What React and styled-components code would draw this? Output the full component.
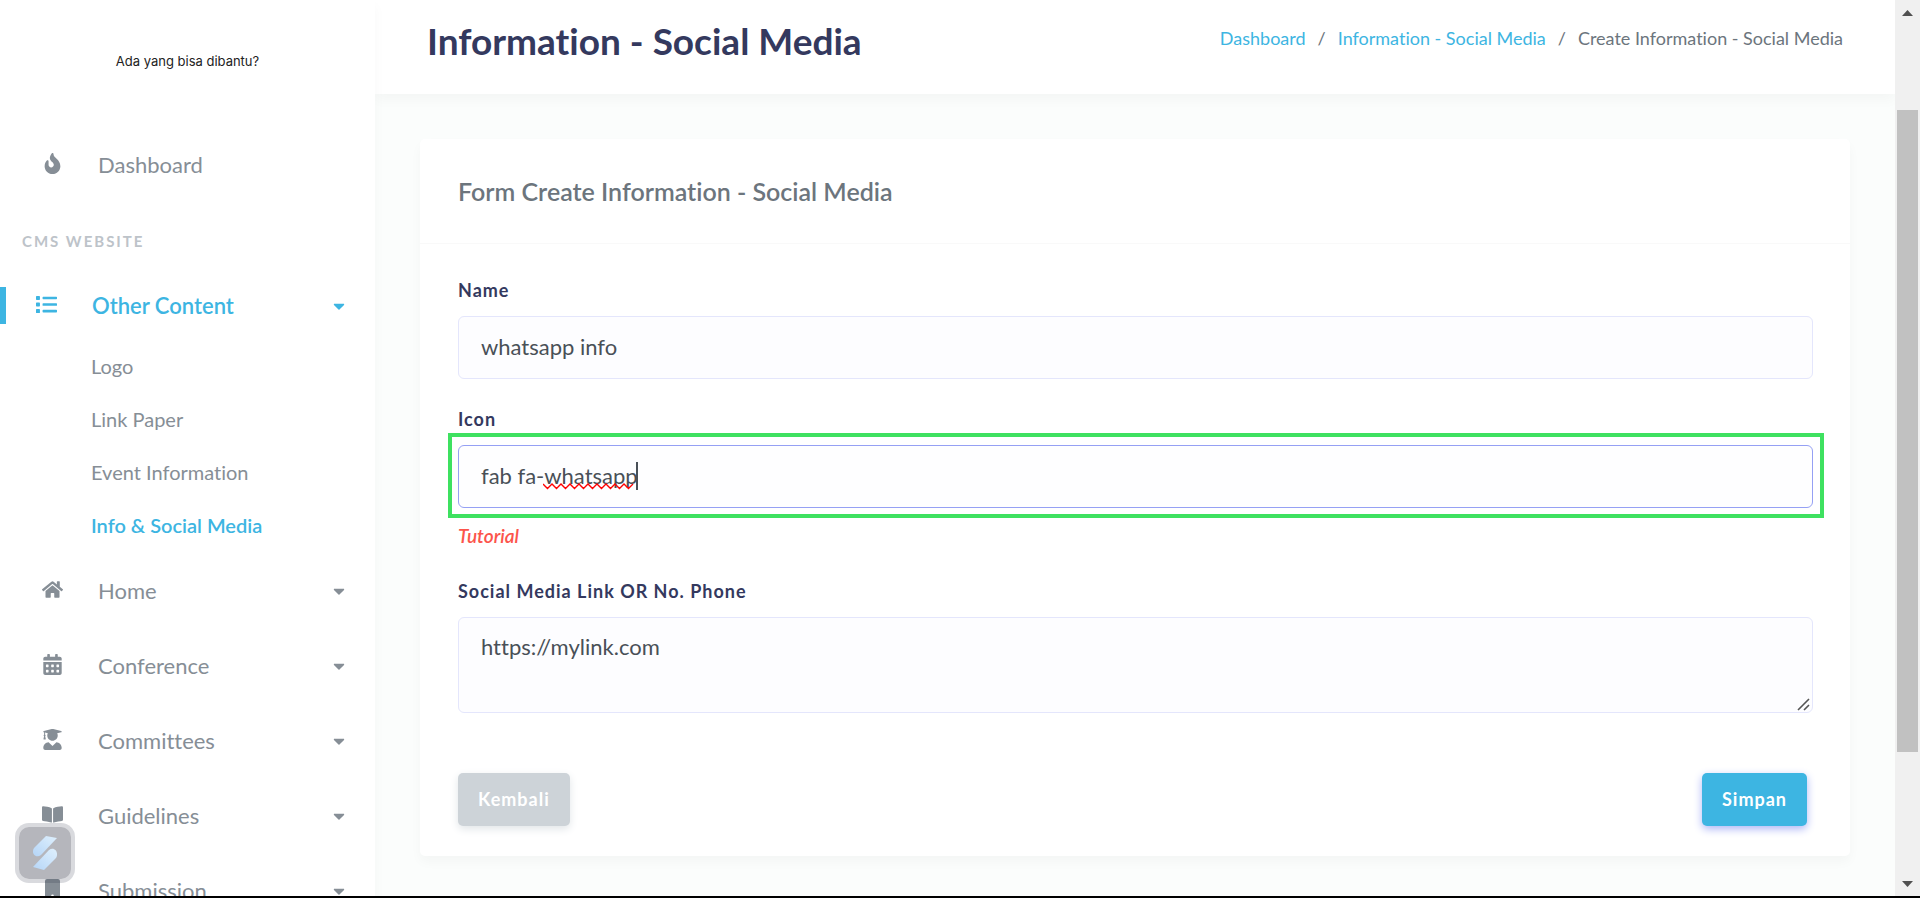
import React from "react";
import styled, { createGlobalStyle, css } from "styled-components";
import {
  FaFire,
  FaList,
  FaHome,
  FaCalendarAlt,
  FaUserGraduate,
  FaBookOpen,
  FaCaretDown,
} from "react-icons/fa";

const primary = "#3db5e2";
const ink = "#34395e";

const GlobalStyle = createGlobalStyle`
  *, *::before, *::after { box-sizing: border-box; }
  html, body { margin: 0; }
  body {
    overflow: hidden;
    background: #fbfdfc;
    color: #6c757d;
    font-family: Lato, "Liberation Sans", sans-serif;
    font-size: 18px;
    line-height: 28px;
    font-variant-ligatures: none;
  }
  a { color: inherit; text-decoration: none; }
  ul, ol { margin: 0; padding: 0; list-style: none; }
`;

const Screen = styled.div`
  display: flex;
  height: 100vh;
  overflow: hidden;
  border-bottom: 2px solid #000;
`;

const Sidebar = styled.aside`
  flex: 0 0 375px;
  position: relative;
  z-index: 2;
  overflow: hidden;
  background: #fff;
  box-shadow: 0 6px 12px rgba(0, 0, 0, 0.03);
`;

const Brand = styled.a`
  display: flex;
  align-items: center;
  justify-content: center;
  height: 128px;
  padding-bottom: 6px;
  color: #222;
  font: 400 13px/20px Inter, sans-serif;
`;

const MenuHeader = styled.h2`
  margin: 0;
  padding: 24px 22px 14px;
  color: #bdc3c9;
  font-size: 15px;
  font-weight: 700;
  line-height: 28px;
  letter-spacing: 2px;
`;

const MenuLink = styled.a`
  display: flex;
  align-items: center;
  height: 75px;
  padding-right: 27px;
  padding-bottom: 2px;
  padding-left: 30px;
  color: #868e96;
  font-size: 22px;

  ${(p) =>
    p.$active &&
    css`
      padding-left: 0;
      color: ${primary};
      font-weight: 600;

      &::before {
        content: "";
        width: 6px;
        height: 37px;
        margin-right: 18px;
        background: ${primary};
      }
    `}
`;

const MenuIcon = styled.span`
  display: flex;
  justify-content: center;
  width: 45px;
  margin-right: 23px;
  padding-bottom: 2px;
  font-size: 21px;
`;

const MenuText = styled.span`
  flex: 1;
`;

const Caret = styled(FaCaretDown)`
  width: 18px;
  height: 18px;
`;

const SubMenu = styled.ul`
  margin-top: -5px;
  padding-bottom: 3px;
`;

const SubLink = styled.a`
  display: flex;
  align-items: center;
  height: 53px;
  padding-left: 91px;
  color: ${(p) => (p.$active ? primary : "#868e96")};
  font-size: 20px;
  font-weight: ${(p) => (p.$active ? 600 : 400)};
`;

const Assistant = styled.button`
  position: fixed;
  z-index: 3;
  left: 15px;
  bottom: 15px;
  display: grid;
  place-items: center;
  width: 60px;
  height: 60px;
  padding: 0;
  border: 4px solid rgba(20, 24, 52, 0.16);
  border-radius: 14px;
  background: #b5b6bc;
  background-clip: padding-box;
`;

const Main = styled.main`
  flex: 1;
  min-width: 0;
`;

const PageHeader = styled.header`
  display: flex;
  align-items: flex-start;
  justify-content: space-between;
  height: 94px;
  padding: 19px 52px 0;
  background: #fff;
  box-shadow: 0 6px 12px rgba(0, 0, 0, 0.03);
`;

const Title = styled.h1`
  margin: 0;
  color: ${ink};
  font-size: 37px;
  font-weight: 700;
  line-height: 44px;
`;

const Crumbs = styled.ol`
  display: flex;
  padding-top: 5px;

  li + li::before {
    content: "/";
    padding: 0 12px;
    color: #6c757d;
  }
`;

const CrumbLink = styled.a`
  color: ${primary};
`;

const Card = styled.section`
  margin: 45px 45px 0;
  border-radius: 5px;
  background: #fff;
  box-shadow: 0 6px 12px rgba(0, 0, 0, 0.03);
`;

const CardHeader = styled.h2`
  margin: 0;
  padding: 38px;
  border-bottom: 1px solid #f9f9f9;
  font-size: 25px;
  font-weight: 600;
  line-height: 28px;
`;

const Form = styled.form`
  padding: 32px 37px 30px 38px;
`;

const Field = styled.div`
  display: flex;
  flex-direction: column;
  align-items: flex-start;
  margin-bottom: ${(p) => p.$gap}px;
`;

const Label = styled.label`
  margin-bottom: 12px;
  color: ${ink};
  font-size: 18px;
  font-weight: 700;
  line-height: 28px;
  letter-spacing: 1px;
`;

const controlStyle = css`
  display: block;
  width: 100%;
  border: 1px solid #e4e6fc;
  border-radius: 6px;
  outline: none;
  background: #fdfdff;
  color: #495057;
  font-family: Lato, "Liberation Sans", sans-serif;
  font-size: 22px;
  line-height: 32px;
  font-variant-ligatures: none;
`;

const Input = styled.input`
  ${controlStyle}
  height: 63px;
  padding: 0 22px 2px;

  ${(p) =>
    p.$focused &&
    css`
      border-color: #95a0f4;
      background: #fefeff;
    `}
`;

const TextArea = styled.textarea`
  ${controlStyle}
  height: 96px;
  padding: 13px 22px;
  resize: none;
`;

const TextAreaFrame = styled.div`
  position: relative;
  width: 100%;
`;

const Grip = styled.svg`
  position: absolute;
  right: 3px;
  bottom: 2px;
  pointer-events: none;
`;

const Highlight = styled.div`
  position: relative;
  width: 100%;

  &::after {
    content: "";
    position: absolute;
    inset: -12px -11px -10px -10px;
    border: 4px solid #3ee160;
    pointer-events: none;
  }
`;

const Squiggle = styled.svg`
  position: absolute;
  left: 85px;
  top: 38px;
`;

const TextCursor = styled.span`
  position: absolute;
  left: 178px;
  top: 17px;
  width: 2px;
  height: 28px;
  background: #495057;
`;

const Hint = styled.a`
  margin-top: 14px;
  color: #fc544b;
  font-size: 19px;
  font-style: italic;
  font-weight: 600;
  line-height: 28px;
`;

const Actions = styled.div`
  display: flex;
  justify-content: space-between;
  padding-right: 6px;
`;

const Button = styled.button`
  height: 53px;
  padding: 0 20px 2px;
  border: 0;
  border-radius: 5px;
  background: ${(p) => (p.$primary ? primary : "#cdd3d8")};
  box-shadow: 0 3px 9px ${(p) => (p.$primary ? "#acb5f6" : "#e1e5e8")};
  color: #fff;
  font: 700 18px/28px Lato, "Liberation Sans", sans-serif;
  letter-spacing: 1px;
`;

const ScrollBar = styled.div`
  display: flex;
  flex: 0 0 25px;
  flex-direction: column;
  align-items: center;
  background: #f0f0f0;
`;

const ScrollArrow = styled.svg`
  flex: none;
  width: 25px;
  height: 25px;
  fill: #505050;
`;

const ScrollTrack = styled.div`
  display: flex;
  flex: 1;
  flex-direction: column;
  width: 21px;
`;

const ScrollSpace = styled.div`
  flex: ${(p) => p.$share} 0 0;
  background: ${(p) => (p.$thumb ? "#c1c1c1" : "transparent")};
`;

function DeviceIcon() {
  return (
    <svg width="15" height="21" viewBox="0 0 15 21" fill="currentColor">
      <path
        fillRule="evenodd"
        d="M2 0h11a2 2 0 0 1 2 2v17a2 2 0 0 1-2 2H2a2 2 0 0 1-2-2V2a2 2 0 0 1 2-2zm5.500 15.500a1.300 1.300 0 1 0 0 2.600 1.300 1.300 0 0 0 0-2.600z"
      />
    </svg>
  );
}

const subItems = ["Logo", "Link Paper", "Event Information", "Info & Social Media"];

const sections = [
  { label: "Home", icon: FaHome },
  { label: "Conference", icon: FaCalendarAlt },
  { label: "Committees", icon: FaUserGraduate },
  { label: "Guidelines", icon: FaBookOpen },
  { label: "Submission", icon: DeviceIcon },
];

function MenuItem({ icon: Icon, label, active, expandable }) {
  return (
    <MenuLink href="#" $active={active}>
      <MenuIcon>
        <Icon />
      </MenuIcon>
      <MenuText>{label}</MenuText>
      {expandable && <Caret />}
    </MenuLink>
  );
}

export default function App() {
  return (
    <>
      <GlobalStyle />
      <Screen>
        <Sidebar>
          <Brand href="#">Ada yang bisa dibantu?</Brand>
          <nav>
            <MenuItem icon={FaFire} label="Dashboard" />
            <MenuHeader>CMS WEBSITE</MenuHeader>
            <MenuItem icon={FaList} label="Other Content" active expandable />
            <SubMenu>
              {subItems.map((item, i) => (
                <li key={item}>
                  <SubLink href="#" $active={i === 3}>
                    {item}
                  </SubLink>
                </li>
              ))}
            </SubMenu>
            {sections.map((s) => (
              <MenuItem key={s.label} icon={s.icon} label={s.label} expandable />
            ))}
          </nav>
        </Sidebar>
        <Main>
          <PageHeader>
            <Title>Information - Social Media</Title>
            <Crumbs>
              <li>
                <CrumbLink href="#">Dashboard</CrumbLink>
              </li>
              <li>
                <CrumbLink href="#">Information - Social Media</CrumbLink>
              </li>
              <li>Create Information - Social Media</li>
            </Crumbs>
          </PageHeader>
          <Card>
            <CardHeader>Form Create Information - Social Media</CardHeader>
            <Form onSubmit={(e) => e.preventDefault()}>
              <Field $gap={26}>
                <Label htmlFor="name">Name</Label>
                <Input id="name" defaultValue="whatsapp info" />
              </Field>
              <Field $gap={27}>
                <Label htmlFor="icon">Icon</Label>
                <Highlight>
                  <Input id="icon" $focused spellCheck={false} defaultValue="fab fa-whatsapp" />
                  <Squiggle width="94" height="7" viewBox="0 0 94 7" aria-hidden="true">
                    <path
                      d={
                        "M0 1" +
                        Array.from({ length: 10 }, () => " l4.5 4.5 l4.5 -4.5").join("")
                      }
                      fill="none"
                      stroke="#f00"
                      strokeWidth="1.4"
                    />
                  </Squiggle>
                  <TextCursor />
                </Highlight>
                <Hint href="#">Tutorial</Hint>
              </Field>
              <Field $gap={60}>
                <Label htmlFor="link">Social Media Link OR No. Phone</Label>
                <TextAreaFrame>
                  <TextArea id="link" defaultValue="https://mylink.com" />
                  <Grip width="13" height="13" viewBox="0 0 13 13" aria-hidden="true">
                    <path d="M1 12 12 1M7 12l5-5" stroke="#555" strokeWidth="1.6" />
                  </Grip>
                </TextAreaFrame>
              </Field>
              <Actions>
                <Button type="button">Kembali</Button>
                <Button type="submit" $primary>
                  Simpan
                </Button>
              </Actions>
            </Form>
          </Card>
        </Main>
        <ScrollBar>
          <ScrollArrow viewBox="0 0 25 25">
            <path d="M7 16 12.500 10 18 16z" />
          </ScrollArrow>
          <ScrollTrack>
            <ScrollSpace $share={85} />
            <ScrollSpace $share={642} $thumb />
            <ScrollSpace $share={119} />
          </ScrollTrack>
          <ScrollArrow viewBox="0 0 25 25">
            <path d="M7 10h11l-5.500 6z" />
          </ScrollArrow>
        </ScrollBar>
        <Assistant type="button" aria-label="Assistant">
          <svg width="26" height="34" viewBox="0 0 26 34">
            <defs>
              <linearGradient id="blade" x1="0" y1="1" x2="1" y2="0">
                <stop offset="0" stopColor="#b5d5f7" />
                <stop offset="1" stopColor="#dff0fd" />
              </linearGradient>
            </defs>
            <path d="M14 0 25 2 9 19C5 22 1 19 1 16C1 14 1 13 3 11z" fill="url(#blade)" />
            <path d="M12 34 1 31 17 14C21 11 25 14 25 18C25 20 25 21 23 23z" fill="url(#blade)" />
          </svg>
        </Assistant>
      </Screen>
    </>
  );
}
